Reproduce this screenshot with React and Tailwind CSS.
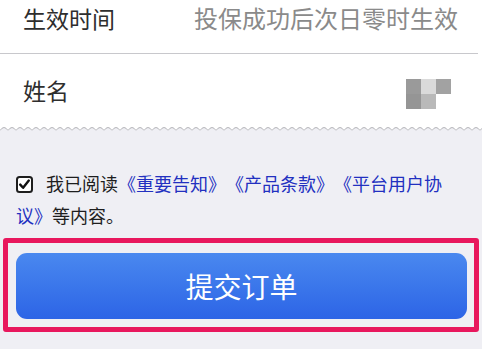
import React from "react";

function Wave() {
  return (
    <svg width="100%" height="7" className="block" aria-hidden="true">
      <defs>
        <pattern id="wv" x="0" y="0" width="8" height="7" patternUnits="userSpaceOnUse">
          <path d="M0 0 H8 V4.5 Q4 -1.5 0 4.5 Z" fill="#ffffff" />
          <path d="M0 4.5 Q4 -1.5 8 4.5" fill="none" stroke="#b4b4b8" strokeWidth="1" />
        </pattern>
      </defs>
      <rect width="100%" height="7" fill="url(#wv)" />
    </svg>
  );
}

function CheckBox() {
  return (
    <svg width="17" height="17" viewBox="0 0 17 17" className="inline-block align-[-2px] mr-[13px]">
      <rect x="1" y="1" width="15" height="15" rx="2.5" fill="#fff" stroke="#1e1e1e" strokeWidth="2" />
      <path d="M4.2 8.6 L7.1 11.8 L12.8 4.6" fill="none" stroke="#111" strokeWidth="2.4" strokeLinecap="round" strokeLinejoin="round" />
    </svg>
  );
}

export default function App() {
  const font = { fontFamily: '"Noto Sans CJK SC", "Noto Sans", sans-serif' };
  return (
    <div className="w-[482px] h-[349px] overflow-hidden bg-[#efeff4]" style={font}>
      <div className="bg-white">
        <div className="h-[53px] flex justify-between pl-[23px] pr-[24px] pt-[3px]">
          <span className="text-[23px] leading-[30px] text-[#2e2e2e]">生效时间</span>
          <span className="text-[24px] leading-[30px] text-[#8a8a8a]">投保成功后次日零时生效</span>
        </div>
        <div className="h-px bg-[#c8c8cc] mr-[4px]" />
        <div className="h-[72px] flex items-center justify-between pl-[23px] pr-[31px]">
          <span className="text-[23px] leading-[30px] text-[#2e2e2e]">姓名</span>
          <div className="grid grid-cols-3 w-[45px] h-[30px] self-start mt-[25px]">
            <div className="bg-[#9a9a9a]" />
            <div className="bg-[#dadada]" />
            <div className="bg-[#a2a2a2]" />
            <div className="bg-[#959595]" />
            <div className="bg-[#b9b9b9]" />
            <div className="bg-white" />
          </div>
        </div>
      </div>
      <Wave />
      <div className="pt-[34px] pl-[16px] pr-[16px]">
        <p className="text-[18px] leading-[32px] text-[#1e1e1e] [text-spacing-trim:space-all]">
          <CheckBox />
          我已阅读<span className="text-[#2230c0]">《重要告知》《产品条款》《平台用户协议》</span>等内容。
        </p>
      </div>
      <div className="mt-[7px] mx-[3px] border-[5px] border-[#e8175d] rounded-[3px] pl-[8px] pr-[7px] pt-[10px] pb-[8px]">
        <div className="h-[66px] rounded-[11px] bg-gradient-to-b from-[#4a88ef] to-[#2d64e6] flex items-center justify-center">
          <span className="text-[28px] leading-none text-white">提交订单</span>
        </div>
      </div>
    </div>
  );
}
